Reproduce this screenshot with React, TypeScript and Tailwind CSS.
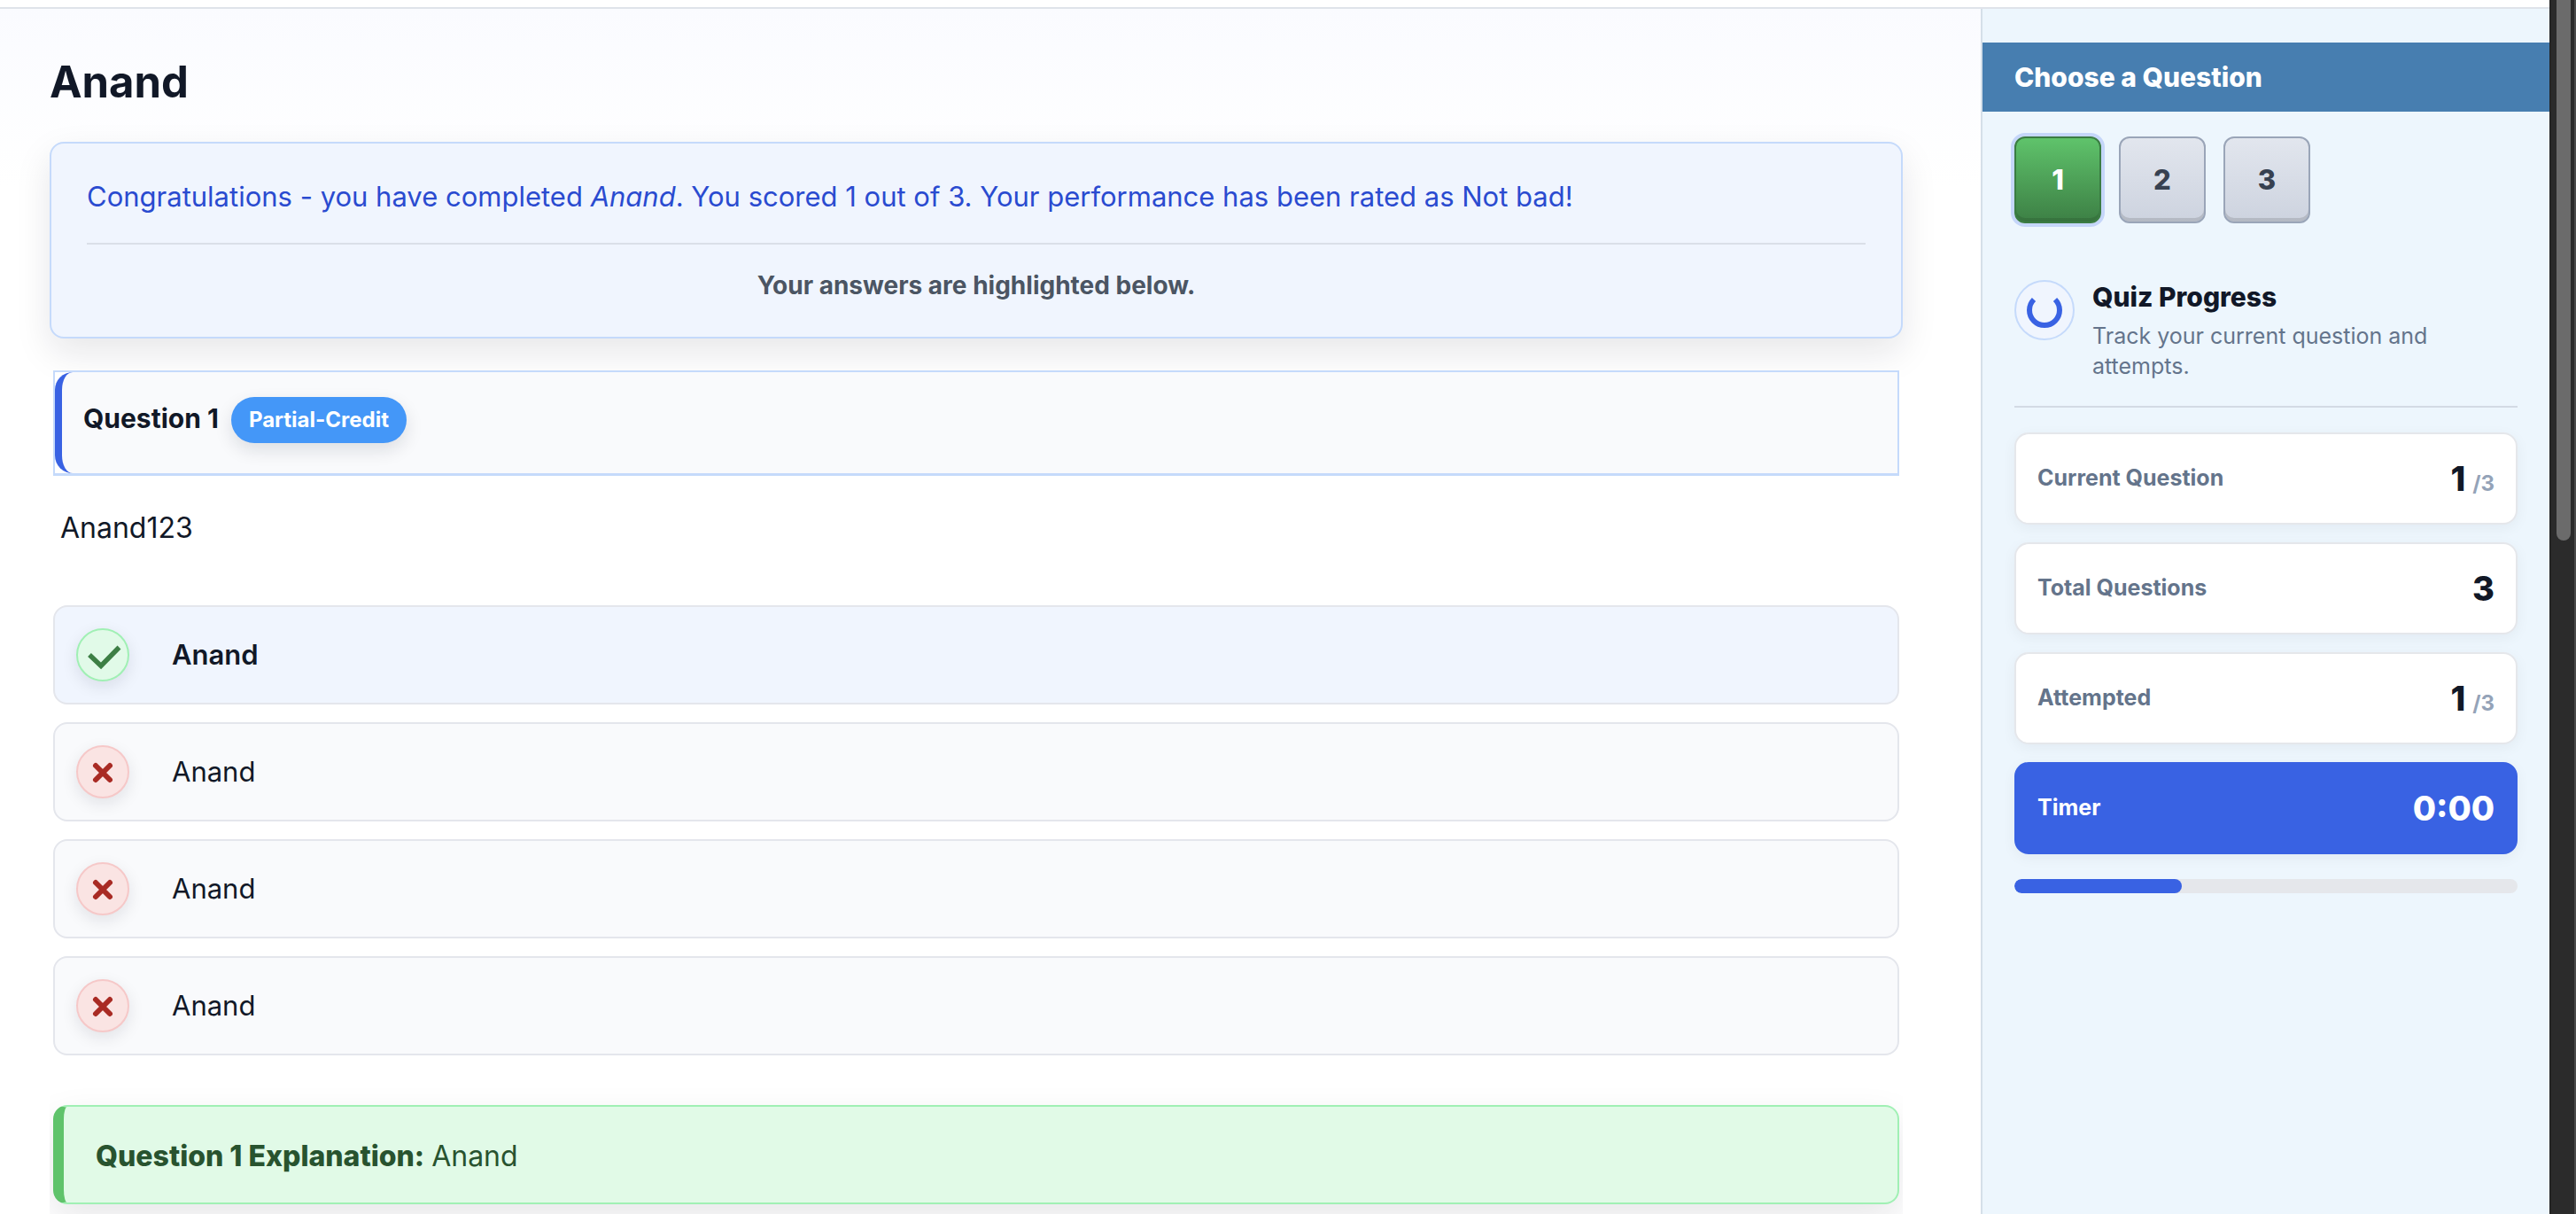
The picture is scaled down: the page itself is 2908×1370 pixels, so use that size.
import { useState } from 'react';

const TOTAL = 3;

interface Option {
  text: string;
  correct: boolean;
}

const options: Option[] = [
  { text: 'Anand', correct: true },
  { text: 'Anand', correct: false },
  { text: 'Anand', correct: false },
  { text: 'Anand', correct: false },
];

function MarkIcon({ correct }: { correct: boolean }) {
  if (correct) {
    return (
      <span className="flex size-15 items-center justify-center rounded-full border-2 border-[#a0f0b4] bg-[#e1fae8] shadow-[0_6px_18px_rgba(15,23,42,0.1)]">
        <svg viewBox="0 0 60 60" className="size-15 shrink-0" aria-label="Correct">
          <path d="M15 30 L28 42.5 L48.5 21.5" fill="none" stroke="#3d7f45" strokeWidth="5.5" />
        </svg>
      </span>
    );
  }
  return (
    <span className="flex size-15 items-center justify-center rounded-full border-2 border-[#f6c8c8] bg-[#fae4e3] shadow-[0_6px_18px_rgba(15,23,42,0.1)]">
      <svg viewBox="0 0 60 60" className="size-15 shrink-0" aria-label="Wrong">
        <path d="M22 23 L38 39 M38 23 L22 39" fill="none" stroke="#a92b24" strokeWidth="6" strokeLinecap="round" />
      </svg>
    </span>
  );
}

function StatCard({ label, value, total }: { label: string; value: string; total?: number }) {
  return (
    <div className="flex h-26 items-center justify-between rounded-2xl border-2 border-[#e5e7eb] bg-white px-6 shadow-[0_4px_16px_rgba(15,23,42,0.05)]">
      <dt className="text-[25px] font-bold text-[#64748b]">{label}</dt>
      <dd className="flex items-baseline gap-2 text-[38px] font-extrabold text-[#111827]">
        {value}
        {total !== undefined && <span className="text-2xl font-bold text-[#94a3b8]">/{total}</span>}
      </dd>
    </div>
  );
}

export default function App() {
  const [current, setCurrent] = useState(1);

  return (
    <div className="flex h-screen overflow-hidden bg-white font-['Inter',sans-serif] text-[#111827]">
      <div className="flex min-w-0 flex-1 flex-col">
        <header className="h-2.5 shrink-0 border-b-2 border-[#dfe3ea] bg-white" />
        <div className="flex min-h-0 flex-1">
          <main className="min-w-0 flex-1 bg-[linear-gradient(#fafbff,#ffffff_200px)] px-14 pt-13">
            <h1 className="text-[49px] leading-[62px] font-bold">Anand</h1>

            <section className="mt-9 mr-8 rounded-2xl border-2 border-[#c5dafb] bg-[#f0f5fe] px-10 shadow-[0_16px_40px_rgba(15,23,42,0.1)]">
              <p className="border-b-2 border-[#dadfe8] pt-9 pb-7 text-[31px] leading-12 text-[#2a4bd0]">
                Congratulations - you have completed <em>Anand</em>. You scored 1 out of 3. Your performance has been rated as Not bad!
              </p>
              <p className="pt-6 pb-9 text-center text-[28px] leading-11 font-bold text-[#4b5563]">
                Your answers are highlighted below.
              </p>
            </section>

            <section className="mt-9 mr-8 px-1">
              <div className="border-2 border-b-3 border-[#c5dafb] bg-white">
                <h2 className="flex h-[114px] items-start rounded-l-[20px] border-l-8 border-[#3962e3] bg-[#f9fafc] pt-7 pl-6 text-[30px] leading-12 font-bold">
                  Question {current}
                  <span className="ml-3.5 rounded-full bg-[#4497f8] px-5 py-0.5 text-2xl leading-12 font-bold text-white shadow-[0_8px_20px_rgba(15,23,42,0.12)]">
                    Partial-Credit
                  </span>
                </h2>
              </div>
              <p className="px-2 pt-9 text-[32px] leading-[46px]">Anand123</p>
              <ul className="mt-16 flex flex-col gap-5">
                {options.map((option, i) => (
                  <li
                    key={i}
                    className={
                      option.correct
                        ? 'flex h-28 items-center gap-12 rounded-2xl border-2 border-[#e4e6ec] bg-[#f0f5fe] px-6 text-[31px] font-semibold'
                        : 'flex h-28 items-center gap-12 rounded-2xl border-2 border-[#e4e6ec] bg-[#f9fafc] px-6 text-[31px]'
                    }
                  >
                    <MarkIcon correct={option.correct} />
                    {option.text}
                  </li>
                ))}
              </ul>
            </section>

            <div className="mr-8 overflow-hidden pt-14 pb-12">
              <p className="mx-1 flex h-28 items-center rounded-2xl border-2 border-l-12 border-[#a0f0b4] border-l-[#5fc36b] bg-[#e1fae7] pt-1 pl-9 text-[32px] text-[#28532f] shadow-[0_16px_40px_rgba(15,23,42,0.1)]">
                <strong className="mr-2 font-extrabold">Question {current} Explanation:</strong> Anand
              </p>
            </div>
          </main>

          <aside className="w-[642px] shrink-0 border-l-2 border-[#d5dfe9] bg-[#edf6fd] pt-[38px]">
            <h2 className="bg-[#477eb0] px-9 py-4 text-[30px] leading-[46px] font-extrabold text-white">Choose a Question</h2>
            <nav className="flex gap-5 px-9 pt-7">
              {Array.from({ length: TOTAL }, (_, i) => i + 1).map((n) => (
                <button
                  key={n}
                  type="button"
                  onClick={() => setCurrent(n)}
                  className={
                    n === current
                      ? 'size-[98px] rounded-xl border-2 border-[#3b7c43] bg-linear-to-b from-[#5fc36b] to-[#3d8045] text-[31px] font-extrabold text-white shadow-[inset_0_-4px_0_rgba(0,0,0,0.1),0_0_0_4px_#c5d6f9]'
                      : 'size-[98px] rounded-xl border-2 border-[#9aa5b8] bg-linear-to-b from-[#e2e6ee] to-[#cdd3df] text-[31px] font-extrabold text-[#374151] shadow-[inset_0_-4px_0_rgba(0,0,0,0.12)]'
                  }
                >
                  {n}
                </button>
              ))}
            </nav>

            <section className="px-9 pt-16">
              <div className="flex items-start gap-5 border-b-2 border-[#d3dae4] pb-7">
                <span className="flex size-17 shrink-0 items-center justify-center rounded-full border-2 border-[#c5dafb] bg-[#f0f5fe]">
                  <svg viewBox="0 0 68 68" className="size-17 shrink-0" aria-hidden="true">
                    <path d="M22 22 A17 17 0 1 0 46 22" fill="none" stroke="#3962e3" strokeWidth="6" />
                  </svg>
                </span>
                <div>
                  <h3 className="text-[30px] leading-[38px] font-extrabold">Quiz Progress</h3>
                  <p className="mt-2 text-[25px] leading-[34px] text-[#64748b]">Track your current question and attempts.</p>
                </div>
              </div>

              <dl className="mt-7 flex flex-col gap-5">
                <StatCard label="Current Question" value={String(current)} total={TOTAL} />
                <StatCard label="Total Questions" value={String(TOTAL)} />
                <StatCard label="Attempted" value="1" total={TOTAL} />
                <div className="flex h-26 items-center justify-between rounded-2xl border-2 border-[#3962e3] bg-[#3962e3] px-6 text-white shadow-[0_4px_16px_rgba(15,23,42,0.05)]">
                  <dt className="text-[25px] font-bold">Timer</dt>
                  <dd className="text-[38px] font-extrabold">0:00</dd>
                </div>
              </dl>
              <div className="mt-7 h-4 overflow-hidden rounded-full bg-[#e5e7eb]">
                <div className="h-full rounded-full bg-[#3962e3]" style={{ width: `${(current / TOTAL) * 100}%` }} />
              </div>
            </section>
          </aside>
        </div>
      </div>

      {/* scrollbar */}
      <div className="h-full w-[30px] shrink-0 border-x-2 border-[#242424] border-r-[#4a4a4a] bg-[#2b2b2b] pr-1 pl-1.5">
        <div className="h-[610px] rounded-b-full bg-[#6b6b6b]" />
      </div>
    </div>
  );
}
